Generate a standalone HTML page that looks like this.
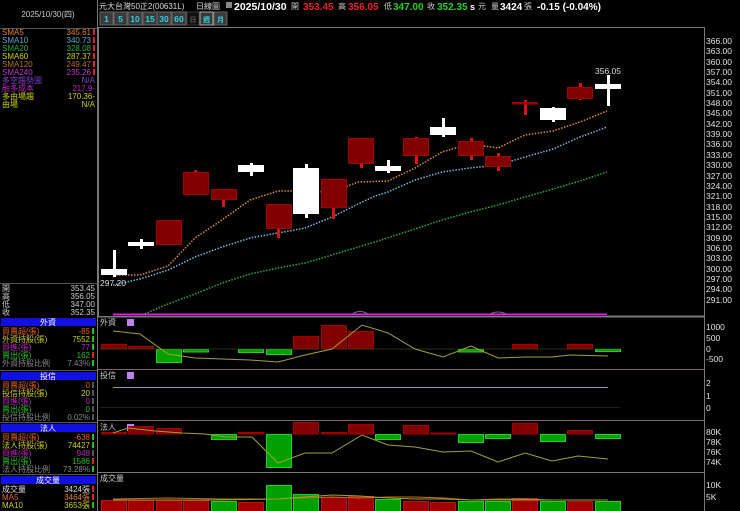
<!DOCTYPE html>
<html><head><meta charset="utf-8"><style>
html,body{margin:0;padding:0;background:#000;width:740px;height:511px;overflow:hidden}
svg{display:block}
text{font-family:"Liberation Sans","Noto Sans CJK TC",sans-serif;}
.s{font-size:8px}
.a{font-size:8.5px;fill:#e0e0e0;font-family:"DejaVu Sans","Noto Sans CJK TC",sans-serif}
.r{text-anchor:end}
</style></head><body>
<svg width="740" height="511" viewBox="0 0 740 511" xmlns="http://www.w3.org/2000/svg">
<rect width="740" height="511" fill="#000"/>
<!-- top bar -->
<text x="99" y="9" class="s" fill="#ddd">元大台灣50正2(00631L)</text>
<text x="196" y="9" class="s" fill="#ddd">日線圖</text>
<rect x="226" y="2" width="6" height="6" fill="#888"/>
<text x="234" y="10" font-size="10.5" font-weight="bold" fill="#fff">2025/10/30</text>
<text x="291" y="9" class="s" fill="#ccc">開</text>
<text x="303" y="10" font-size="10" font-weight="bold" fill="#f02020">353.45</text>
<text x="338" y="9" class="s" fill="#ccc">高</text>
<text x="348" y="10" font-size="10" font-weight="bold" fill="#f02020">356.05</text>
<text x="384" y="9" class="s" fill="#ccc">低</text>
<text x="393" y="10" font-size="10" font-weight="bold" fill="#20d020">347.00</text>
<text x="427" y="9" class="s" fill="#ccc">收</text>
<text x="437" y="10" font-size="10" font-weight="bold" fill="#20d020">352.35</text>
<text x="470" y="10" font-size="9" font-weight="bold" fill="#fff">s</text>
<text x="478" y="9" class="s" fill="#ccc">元</text>
<text x="491" y="9" class="s" fill="#ccc">量</text>
<text x="500" y="10" font-size="10" font-weight="bold" fill="#fff">3424</text>
<text x="524" y="9" class="s" fill="#ccc">張</text>
<text x="537" y="10" font-size="10" font-weight="bold" fill="#fff">-0.15 (-0.04%)</text>
<!-- buttons -->
<g font-size="8.5" font-weight="bold" fill="#30d0e0" text-anchor="middle">
<rect x="100" y="12" width="13" height="13" fill="#3a3a3a" stroke="#666"/><text x="106.5" y="22">1</text>
<rect x="114" y="12" width="13" height="13" fill="#3a3a3a" stroke="#666"/><text x="120.5" y="22">5</text>
<rect x="128" y="12" width="14" height="13" fill="#3a3a3a" stroke="#666"/><text x="135" y="22">10</text>
<rect x="143" y="12" width="14" height="13" fill="#3a3a3a" stroke="#666"/><text x="150" y="22">15</text>
<rect x="157" y="12" width="14" height="13" fill="#3a3a3a" stroke="#666"/><text x="164" y="22">30</text>
<rect x="172" y="12" width="14" height="13" fill="#3a3a3a" stroke="#666"/><text x="179" y="22">60</text>
<rect x="187" y="12" width="12" height="13" fill="#111" stroke="#333"/><text x="193" y="22" fill="#555" font-size="7">日</text>
<rect x="200" y="12" width="13" height="13" fill="#3a3a3a" stroke="#aaa"/><text x="206.5" y="22" font-size="7">週</text>
<rect x="214" y="12" width="13" height="13" fill="#3a3a3a" stroke="#666"/><text x="220.5" y="22" font-size="7">月</text>
</g>
<!-- left panel -->
<line x1="97.5" y1="0" x2="97.5" y2="511" stroke="#777"/>
<line x1="0" y1="28.5" x2="97" y2="28.5" stroke="#555"/>
<text x="48" y="17" class="s" fill="#ccc" text-anchor="middle">2025/10/30(四)</text>
<g class="s">
<text x="2" y="35" fill="#e08030">SMA5</text><text x="91" y="35" class="r" fill="#e08030">345.61</text>
<text x="2" y="43" fill="#60a8d0">SMA10</text><text x="91" y="43" class="r" fill="#60a8d0">340.73</text>
<text x="2" y="51" fill="#20b030">SMA20</text><text x="91" y="51" class="r" fill="#20b030">328.08</text>
<text x="2" y="59" fill="#d0d000">SMA60</text><text x="91" y="59" class="r" fill="#d0d000">287.37</text>
<text x="2" y="67" fill="#b07020">SMA120</text><text x="91" y="67" class="r" fill="#b07020">249.47</text>
<text x="2" y="75" fill="#c030d0">SMA240</text><text x="91" y="75" class="r" fill="#c030d0">235.26</text>
<text x="2" y="83" fill="#8040d0">多空趨勢圖</text><text x="95" y="83" class="r" fill="#8040d0">N/A</text>
<text x="2" y="91" fill="#c020c0">融多成本</text><text x="95" y="91" class="r" fill="#c020c0">217.9-</text>
<text x="2" y="99" fill="#d0d000">多由場趨</text><text x="95" y="99" class="r" fill="#d0d000">170.36-</text>
<text x="2" y="107" fill="#d0d000">由場</text><text x="95" y="107" class="r" fill="#d0d000">N/A</text>
</g>
<g fill="#e02020"><rect x="93" y="29" width="2" height="6"/><rect x="93" y="37" width="2" height="6"/><rect x="93" y="45" width="2" height="6"/><rect x="93" y="53" width="2" height="6"/><rect x="93" y="61" width="2" height="6"/><rect x="93" y="69" width="2" height="6"/></g>
<!-- OHLC -->
<line x1="0" y1="283.5" x2="97" y2="283.5" stroke="#555"/>
<g class="s" fill="#ccc">
<text x="2" y="291">開</text><text x="95" y="291" class="r">353.45</text>
<text x="2" y="299">高</text><text x="95" y="299" class="r">356.05</text>
<text x="2" y="307">低</text><text x="95" y="307" class="r">347.00</text>
<text x="2" y="315">收</text><text x="95" y="315" class="r">352.35</text>
</g>
<!-- sections -->
<g class="s">
<rect x="1" y="318" width="95" height="8" fill="#1010e0"/><text x="48" y="325" fill="#fff" text-anchor="middle">外資</text>
<text x="2" y="334" fill="#e06020">買賣超(張)</text><text x="90" y="334" class="r" fill="#e06020">-85</text>
<text x="2" y="342" fill="#d0d000">外資持股(張)</text><text x="90" y="342" class="r" fill="#d0d000">7552</text>
<text x="2" y="350" fill="#c020c0">買進(張)</text><text x="90" y="350" class="r" fill="#c020c0">77</text>
<text x="2" y="358" fill="#20c020">賣出(張)</text><text x="90" y="358" class="r" fill="#20c020">162</text>
<text x="2" y="366" fill="#888">外資持股比例</text><text x="90" y="366" class="r" fill="#888">7.43%</text>
<line x1="0" y1="370.5" x2="97" y2="370.5" stroke="#555"/>
<rect x="1" y="372" width="95" height="8" fill="#1010e0"/><text x="48" y="379" fill="#fff" text-anchor="middle">投信</text>
<text x="2" y="388" fill="#e06020">買賣超(張)</text><text x="90" y="388" class="r" fill="#e06020">0</text>
<text x="2" y="396" fill="#d0d000">投信持股(張)</text><text x="90" y="396" class="r" fill="#d0d000">20</text>
<text x="2" y="404" fill="#c020c0">買進(張)</text><text x="90" y="404" class="r" fill="#c020c0">0</text>
<text x="2" y="412" fill="#20c020">賣出(張)</text><text x="90" y="412" class="r" fill="#20c020">0</text>
<text x="2" y="420" fill="#888">投信持股比例</text><text x="90" y="420" class="r" fill="#888">0.02%</text>
<line x1="0" y1="422.5" x2="97" y2="422.5" stroke="#555"/>
<rect x="1" y="424" width="95" height="8" fill="#1010e0"/><text x="48" y="431" fill="#fff" text-anchor="middle">法人</text>
<text x="2" y="440" fill="#e06020">買賣超(張)</text><text x="90" y="440" class="r" fill="#e06020">-638</text>
<text x="2" y="448" fill="#d0d000">法人持股(張)</text><text x="90" y="448" class="r" fill="#d0d000">74427</text>
<text x="2" y="456" fill="#c020c0">買進(張)</text><text x="90" y="456" class="r" fill="#c020c0">948</text>
<text x="2" y="464" fill="#20c020">賣出(張)</text><text x="90" y="464" class="r" fill="#20c020">1586</text>
<text x="2" y="472" fill="#888">法人持股比例</text><text x="90" y="472" class="r" fill="#888">73.28%</text>
<line x1="0" y1="474.5" x2="97" y2="474.5" stroke="#555"/>
<rect x="1" y="476" width="95" height="8" fill="#1010e0"/><text x="48" y="483" fill="#fff" text-anchor="middle">成交量</text>
<text x="2" y="492" fill="#ddd">成交量</text><text x="90" y="492" class="r" fill="#ddd">3424張</text>
<text x="2" y="500" fill="#e06020">MA5</text><text x="90" y="500" class="r" fill="#e08030">3464張</text>
<text x="2" y="508" fill="#d0d000">MA10</text><text x="90" y="508" class="r" fill="#d0d000">3653張</text>
</g>
<g fill="#20c020"><rect x="92" y="328" width="2" height="6"/><rect x="92" y="336" width="2" height="6"/><rect x="92" y="344" width="2" height="6"/><rect x="92" y="360" width="2" height="6"/><rect x="92" y="434" width="2" height="6"/><rect x="92" y="442" width="2" height="6"/><rect x="92" y="466" width="2" height="6"/><rect x="92" y="502" width="2" height="6"/></g>
<g fill="#e02020"><rect x="92" y="352" width="2" height="6"/><rect x="92" y="458" width="2" height="6"/><rect x="92" y="486" width="2" height="6"/><rect x="92" y="494" width="2" height="6"/></g>
<g fill="#555"><rect x="92" y="382" width="2" height="6"/><rect x="92" y="390" width="2" height="6"/><rect x="92" y="398" width="2" height="6"/><rect x="92" y="406" width="2" height="6"/><rect x="92" y="414" width="2" height="6"/><rect x="92" y="450" width="2" height="6"/></g>

<!-- main chart frame -->
<rect x="98.5" y="27.5" width="606" height="289" fill="none" stroke="#777"/>
<!-- price axis -->
<g class="a">
<text x="706" y="44">366.00</text><text x="706" y="54">363.00</text><text x="706" y="65">360.00</text><text x="706" y="75">357.00</text><text x="706" y="85">354.00</text><text x="706" y="96">351.00</text><text x="706" y="106">348.00</text><text x="706" y="116">345.00</text><text x="706" y="127">342.00</text><text x="706" y="137">339.00</text><text x="706" y="147">336.00</text><text x="706" y="158">333.00</text><text x="706" y="168">330.00</text><text x="706" y="179">327.00</text><text x="706" y="189">324.00</text><text x="706" y="199">321.00</text><text x="706" y="210">318.00</text><text x="706" y="220">315.00</text><text x="706" y="230">312.00</text><text x="706" y="241">309.00</text><text x="706" y="251">306.00</text><text x="706" y="261">303.00</text><text x="706" y="272">300.00</text><text x="706" y="282">297.00</text><text x="706" y="292">294.00</text><text x="706" y="303">291.00</text>
</g>
<!-- MA lines -->
<polyline fill="none" stroke="#e08a30" stroke-width="1.5" stroke-dasharray="1.5,1.5" points="113,275 140,275 168,266 195,238 222,220 250,200 278,191 305,191 332,192 358,182 388,181 415,168 442,152 470,144 498,148 525,135 553,131 580,122 607,111"/>
<polyline fill="none" stroke="#70b8e0" stroke-width="1.5" stroke-dasharray="1.5,1.5" points="113,285 140,279 168,270 195,257 222,247 250,238 278,233 305,228 332,217 358,204 375,196 388,192 415,180 442,172 470,168 498,165 525,157 553,149 580,137 607,127"/>
<polyline fill="none" stroke="#20b030" stroke-width="1.5" stroke-dasharray="1.5,1.5" points="142,315 168,304 195,294 222,283 250,274 278,268 305,263 332,255 358,247 375,242 415,229 442,220 470,212 498,205 525,197 553,189 580,181 607,172"/>
<line x1="113" y1="314.5" x2="607" y2="314.5" stroke="#e020e0" stroke-width="2"/>
<line x1="607" y1="316" x2="704" y2="316" stroke="#777"/>
<path d="M352 314 Q360 309 368 314" fill="none" stroke="#707090"/>
<path d="M490 314 Q498 310 506 314" fill="none" stroke="#707090"/>
<!-- candles: wicks -->
<g fill="#fff">
<rect x="113" y="250" width="3" height="27"/><rect x="101" y="269" width="26" height="6"/>
<rect x="140" y="239" width="3" height="10"/><rect x="128" y="242" width="26" height="4"/>
<rect x="250" y="163" width="3" height="13"/><rect x="238" y="165" width="26" height="7"/>
<rect x="305" y="164" width="3" height="54"/><rect x="293" y="168" width="26" height="46"/>
<rect x="387" y="160" width="3" height="13"/><rect x="375" y="166" width="26" height="5"/>
<rect x="442" y="118" width="3" height="19"/><rect x="430" y="127" width="26" height="8"/>
<rect x="552" y="107" width="3" height="15"/><rect x="540" y="108" width="26" height="12"/>
<rect x="607" y="75" width="3" height="31"/><rect x="595" y="84" width="26" height="5"/>
</g>
<g fill="#e01010">
<rect x="194" y="170" width="3" height="3"/>
<rect x="222" y="198" width="3" height="9"/>
<rect x="277" y="228" width="3" height="10"/>
<rect x="332" y="206" width="3" height="13"/>
<rect x="360" y="162" width="3" height="6"/>
<rect x="415" y="137" width="3" height="27"/>
<rect x="470" y="138" width="3" height="22"/>
<rect x="497" y="153" width="3" height="18"/>
<rect x="524" y="100" width="3" height="15"/>
<rect x="579" y="83" width="3" height="17"/>
</g>
<g fill="#800000" stroke="#a00000">
<rect x="156.5" y="220.5" width="25" height="24"/>
<rect x="183.5" y="172.5" width="25" height="22"/>
<rect x="211.5" y="189.5" width="25" height="10"/>
<rect x="266.5" y="204.5" width="25" height="24"/>
<rect x="321.5" y="179.5" width="25" height="28"/>
<rect x="348.5" y="138.5" width="25" height="25"/>
<rect x="403.5" y="138.5" width="25" height="17"/>
<rect x="458.5" y="141.5" width="25" height="14"/>
<rect x="485.5" y="156.5" width="25" height="10"/>
<rect x="512.5" y="102.5" width="25" height="1.5"/>
<rect x="567.5" y="87.5" width="25" height="11"/>
</g>
<text x="100" y="286" font-size="8.5" fill="#ddd" font-family="DejaVu Sans">297.20</text>
<text x="595" y="74" font-size="8.5" fill="#ddd" font-family="DejaVu Sans">356.05</text>

<!-- 外資 panel -->
<line x1="98" y1="317" x2="704" y2="317" stroke="#777"/>
<text x="100" y="325" class="s" fill="#ccc">外資</text>
<rect x="127" y="319" width="7" height="7" fill="#c080f0"/>
<g fill="#800000" stroke="#a00000"><rect x="101.5" y="344.5" width="25" height="4.5"/><rect x="128.5" y="346.5" width="25" height="2.5"/><rect x="293.5" y="336.5" width="25" height="12.5"/><rect x="321.5" y="325.5" width="25" height="23.5"/><rect x="348.5" y="331.5" width="25" height="17.5"/><rect x="512.5" y="344.5" width="25" height="4.5"/><rect x="567.5" y="344.5" width="25" height="4.5"/></g>
<g fill="#00a000" stroke="#20d020"><rect x="156.5" y="349.5" width="25" height="13"/><rect x="183.5" y="349.5" width="25" height="2.5"/><rect x="238.5" y="349.5" width="25" height="3"/><rect x="266.5" y="349.5" width="25" height="5"/><rect x="458.5" y="349.5" width="25" height="2.5"/><rect x="595.5" y="349.5" width="25" height="2"/></g>
<line x1="100" y1="349" x2="620" y2="349" stroke="#404000" stroke-width="0.8"/>
<polyline fill="none" stroke="#a0a030" points="113,331 140,334 168,354 195,358 222,359 250,360 278,362 305,355 332,349 362,325 388,333 415,349 443,357 471,346 498,358 525,357 552,357 570,355 608,356"/>
<g class="a"><text x="706" y="330">1000</text><text x="706" y="341">500</text><text x="706" y="352">0</text><text x="706" y="362">-500</text></g>
<line x1="98" y1="369.5" x2="704" y2="369.5" stroke="#806070"/>
<!-- 投信 -->
<text x="100" y="378" class="s" fill="#ccc">投信</text>
<rect x="127" y="372" width="7" height="7" fill="#c080f0"/>
<line x1="113" y1="387.5" x2="608" y2="387.5" stroke="#a0a030"/>
<line x1="100" y1="407.5" x2="620" y2="407.5" stroke="#202020"/>
<g class="a"><text x="706" y="386">2</text><text x="706" y="399">1</text><text x="706" y="411">0</text></g>
<line x1="98" y1="420.5" x2="704" y2="420.5" stroke="#806070"/>
<!-- 法人 -->
<text x="100" y="430" class="s" fill="#ccc">法人</text>
<rect x="127" y="424" width="7" height="7" fill="#c080f0"/>
<g fill="#800000" stroke="#a00000"><rect x="101.5" y="432.5" width="25" height="1.5"/><rect x="128.5" y="426.5" width="25" height="7.5"/><rect x="156.5" y="428.5" width="25" height="5.5"/><rect x="238.5" y="432.5" width="25" height="1.5"/><rect x="293.5" y="422.5" width="25" height="11.5"/><rect x="321.5" y="432.5" width="25" height="1.5"/><rect x="348.5" y="424.5" width="25" height="9.5"/><rect x="403.5" y="425.5" width="25" height="8.5"/><rect x="430.5" y="433" width="25" height="1"/><rect x="512.5" y="423.5" width="25" height="10.5"/><rect x="567.5" y="430.5" width="25" height="3.5"/></g>
<g fill="#00a000" stroke="#20d020"><rect x="211.5" y="434.5" width="25" height="5"/><rect x="266.5" y="434.5" width="25" height="33"/><rect x="375.5" y="434.5" width="25" height="5"/><rect x="458.5" y="434.5" width="25" height="8"/><rect x="485.5" y="434.5" width="25" height="4"/><rect x="540.5" y="434.5" width="25" height="7"/><rect x="595.5" y="434.5" width="25" height="4"/></g>
<polyline fill="none" stroke="#a0a030" points="113,433 128,428 155,431 182,433 205,434 225,437 252,437 278,463 305,453 332,453 362,435 388,445 415,447 443,452 471,451 498,462 525,453 552,461 578,456 608,459"/>
<g class="a"><text x="706" y="435">80K</text><text x="706" y="445">78K</text><text x="706" y="455">76K</text><text x="706" y="465">74K</text></g>
<line x1="98" y1="472.5" x2="704" y2="472.5" stroke="#777"/>
<!-- 成交量 -->
<text x="100" y="481" class="s" fill="#ccc">成交量</text>
<g fill="#a00000" stroke="#c01010"><rect x="101.5" y="500.5" width="25" height="11"/><rect x="128.5" y="500.5" width="25" height="11"/><rect x="156.5" y="500.5" width="25" height="11"/><rect x="183.5" y="500.5" width="25" height="11"/><rect x="238.5" y="502.5" width="25" height="9"/><rect x="321.5" y="497.5" width="25" height="14"/><rect x="348.5" y="496.5" width="25" height="15"/><rect x="403.5" y="501.5" width="25" height="10"/><rect x="430.5" y="502.5" width="25" height="9"/><rect x="512.5" y="498.5" width="25" height="13"/><rect x="567.5" y="501.5" width="25" height="10"/></g>
<g fill="#00a000" stroke="#20d020"><rect x="211.5" y="501.5" width="25" height="10"/><rect x="266.5" y="485.5" width="25" height="26"/><rect x="293.5" y="494.5" width="25" height="17"/><rect x="375.5" y="499.5" width="25" height="12"/><rect x="458.5" y="501.5" width="25" height="10"/><rect x="485.5" y="501.5" width="25" height="10"/><rect x="540.5" y="501.5" width="25" height="10"/><rect x="595.5" y="501.5" width="25" height="10"/></g>
<polyline fill="none" stroke="#c07020" points="113,499 168,498 222,499 278,499 305,498 332,497 360,498 388,497 415,497 443,498 471,500 498,499 525,499 552,500 580,500 608,500"/>
<polyline fill="none" stroke="#a0a030" points="113,500 168,500 222,500 278,499 305,497 332,495 360,496 388,498 415,499 443,499 471,500 498,500 525,500 552,500 580,500 608,500"/>
<g class="a"><text x="706" y="488">10K</text><text x="706" y="500">5K</text></g>
<line x1="704.5" y1="317" x2="704.5" y2="511" stroke="#777"/>
</svg>
</body></html>
